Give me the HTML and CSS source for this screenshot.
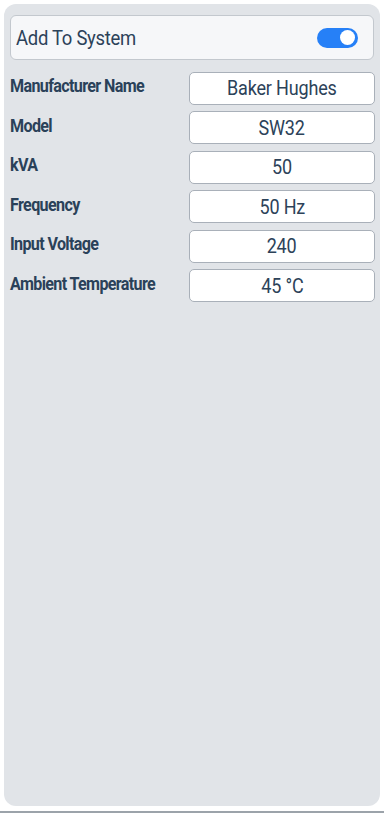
FILE: index.html
```html
<!DOCTYPE html>
<html>
<head>
<meta charset="utf-8">
<link rel="stylesheet" href="styles.css">
</head>
<body>
<div class="panel">
  <div class="header">
    <span class="title">Add To System</span>
    <span class="toggle"><span class="knob"></span></span>
  </div>
  <div class="rows">
    <div class="row"><span class="label">Manufacturer Name</span><span class="value"><span class="vtext">Baker Hughes</span></span></div>
    <div class="row"><span class="label">Model</span><span class="value"><span class="vtext">SW32</span></span></div>
    <div class="row"><span class="label">kVA</span><span class="value"><span class="vtext">50</span></span></div>
    <div class="row"><span class="label">Frequency</span><span class="value"><span class="vtext">50 Hz</span></span></div>
    <div class="row"><span class="label">Input Voltage</span><span class="value"><span class="vtext">240</span></span></div>
    <div class="row"><span class="label">Ambient Temperature</span><span class="value"><span class="vtext">45 °C</span></span></div>
  </div>
</div>
<div class="bottom-line"></div>
</body>
</html>
```

FILE: styles.css
```css
html, body {
  margin: 0;
  padding: 0;
  background: #ffffff;
  height: 813px;
  overflow: hidden;
}
body {
  font-family: Roboto, "Liberation Sans", sans-serif;
  color: #2c4259;
  display: flex;
  flex-direction: column;
}
.panel {
  margin: 4px 4px 0 4px;
  height: 803px;
  background: #e1e4e8;
  border-radius: 12px;
  padding: 11px 5px 0 6px;
  box-sizing: border-box;
}
.header {
  height: 45px;
  box-sizing: border-box;
  background: #f6f7f9;
  border: 1px solid #c3c8ce;
  border-radius: 6px;
  margin-right: 1px;
  display: flex;
  align-items: center;
  justify-content: space-between;
  padding: 0 15px 0 5px;
}
.title {
  display: inline-block;
  font-size: 20.5px;
  letter-spacing: -0.3px;
  color: #2c4259;
  transform: scaleX(0.9);
  transform-origin: left center;
}
.toggle {
  width: 41px;
  height: 20px;
  border-radius: 10px;
  background: #2680f7;
  display: flex;
  align-items: center;
  justify-content: flex-end;
  padding: 0 3px;
  box-sizing: border-box;
}
.knob {
  width: 15px;
  height: 15px;
  border-radius: 50%;
  background: #ffffff;
}
.rows {
  display: flex;
  flex-direction: column;
  gap: 6.5px;
  margin-top: 11.5px;
}
.row {
  display: flex;
  align-items: center;
  justify-content: space-between;
  height: 33px;
}
.label {
  display: inline-block;
  font-size: 17.5px;
  font-weight: 700;
  letter-spacing: -0.7px;
  color: #2a4159;
  transform: translateY(-2px) scaleX(0.92);
  transform-origin: left center;
  white-space: nowrap;
}
.value {
  width: 186px;
  height: 33px;
  box-sizing: border-box;
  background: #ffffff;
  border: 1px solid #a9b0b9;
  border-radius: 5px;
  display: flex;
  align-items: center;
  justify-content: center;
  color: #2c4259;
}
.vtext {
  display: inline-block;
  font-size: 20px;
  letter-spacing: -0.2px;
  transform: scaleX(0.9);
  white-space: nowrap;
}
.bottom-line {
  margin-top: 5px;
  height: 2px;
  background: #9ca3aa;
}
```
